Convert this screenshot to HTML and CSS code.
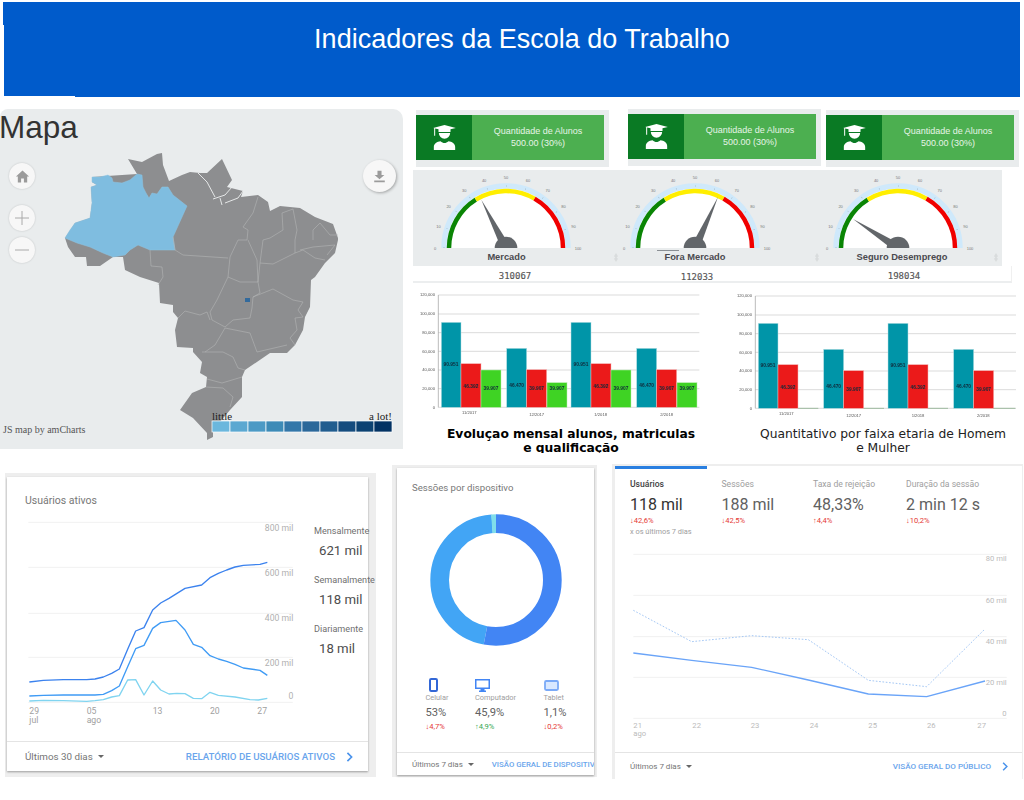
FILE: index.html
```html
<!DOCTYPE html>
<html lang="pt-BR">
<head>
<meta charset="utf-8">
<title>Indicadores da Escola do Trabalho</title>
<link rel="stylesheet" href="styles.css">
</head>
<body>
<header class="hero"><h1>Indicadores da Escola do Trabalho</h1></header>

<section class="top">
  <div class="map-panel">
    <h2 class="map-title">Mapa</h2>
    <svg class="map-canvas" viewBox="0 109 403 340" width="403" height="340">
      <path class="land" d="M128 159L142 162L157 154L162 153L163 165L169 181L182 175L190 172L200 173L207 173L222 159L232 180L227 187L243 191L241 197L258 195L268 202L270 211L280 206L300 208L315 217L333 224L338 238L338 240L335 253L325 263L315 277L311 280L310 307L305 317L303 330L295 345L287 353L270 353L245 370L242 377L242 397L230 410L213 430L213 437L207 440L207 433L193 418L180 410L192 393L206 387L207 377L200 373L202 362L193 352L193 348L177 347L175 330L178 318L173 312L173 305L160 303L159 283L140 277L125 270L123 257L113 257L100 266L87 266L86 257L75 257L68 247L65 238L75 223L90 218L92 203L91 187L97 185L92 182L92 177L137 174Z"/>
      <path class="amazonas" d="M92 177L100 177L108 175L112 178L113 182L122 183L130 180L137 174L142 175L143 187L146 193L149 198L152 193L157 194L162 187L168 187L173 195L187 206L173 237L175 250L150 250L138 245L130 250L125 255L113 257L103 253L90 247L77 243L65 238L70 230L75 223L90 218L92 203L91 187L97 185L92 182Z"/>
      <path class="border" d="M173 237L175 250L183 255L228 258M150 250L151 266L162 267L163 277L158 285M258 197L253 213L243 227L248 230L247 240L238 240L230 257L228 277L217 300L210 312L212 320L225 327L233 320L250 318L252 308L253 297L260 293L258 282L240 282L228 277M248 240L257 260L258 282L260 263L273 264L295 253L303 250L315 258L325 260M253 297L273 289L293 300L303 302L298 310L303 317L295 318L297 330L290 338L295 345M225 328L250 333L257 352L287 345M293 209L282 213L283 230L270 238L263 240L260 263M293 209L297 230L295 240L295 253M313 240L313 230L320 223L330 235L338 235M300 250L313 247L335 245L327 255M225 328L215 345L205 352M178 318L185 311L200 315L207 312L210 320M202 352L223 352L233 357L238 368L245 370M207 379L222 383L242 377M206 387L223 388L233 397L230 407"/>
      <path class="border-white" d="M198 173L207 182L215 197M213 199L225 195L232 187M225 203L238 198L243 191M220 198L222 205"/>
      <rect class="df" x="245" y="298" width="5" height="4"/>
      <text class="map-credit" x="3" y="433">JS map by amCharts</text>
      <text class="map-legend" x="212" y="420">little</text>
      <text class="map-legend map-legend-end" x="392" y="420">a lot!</text>
      <g class="legend-scale">
        <rect class="s0" x="212" y="421" width="18" height="11"/>
        <rect class="s1" x="230" y="421" width="18" height="11"/>
        <rect class="s2" x="248" y="421" width="18" height="11"/>
        <rect class="s3" x="266" y="421" width="18" height="11"/>
        <rect class="s4" x="284" y="421" width="18" height="11"/>
        <rect class="s5" x="302" y="421" width="18" height="11"/>
        <rect class="s6" x="320" y="421" width="18" height="11"/>
        <rect class="s7" x="338" y="421" width="18" height="11"/>
        <rect class="s8" x="356" y="421" width="18" height="11"/>
        <rect class="s9" x="374" y="421" width="18" height="11"/>
      </g>
    </svg>
    <div class="map-btn btn-home"><svg viewBox="0 0 16 16" width="15" height="15"><path class="btn-glyph" d="M8 1.5L15 8H13V14.5H9.5V10H6.5V14.5H3V8H1Z"/></svg></div>
    <div class="map-btn btn-plus"><svg viewBox="0 0 16 16" width="16" height="16"><path class="btn-line" d="M8 1V15M1 8H15"/></svg></div>
    <div class="map-btn btn-minus"><svg viewBox="0 0 16 16" width="16" height="16"><path class="btn-line" d="M1 8H15"/></svg></div>
    <div class="map-btn btn-save"><svg viewBox="0 0 16 16" width="13" height="15"><path class="btn-glyph" d="M5.5 1H10.5V6H14L8 11.5L2 6H5.5ZM1.5 13H14.5V15H1.5Z"/></svg></div>
  </div>

  <div class="dash">
    <div class="kpis">
      <div class="kpi kpi-a">
        <div class="kpi-inner">
          <div class="kpi-icon"><svg viewBox="0 0 68 75" width="23" height="25"><path class="grad" d="M0 9L34 0L68 9L52 13V21H16V13L6 10.5V32H3V10ZM17 24H51A17 17 0 0 1 17 24ZM2 75V66C2 56 12 50 22 49C30 56 38 56 46 49C56 50 66 56 66 66V75Z"/></svg></div>
          <p class="kpi-text">Quantidade de Alunos<br>500.00 (30%)</p>
        </div>
      </div>
      <div class="kpi kpi-b">
        <div class="kpi-inner">
          <div class="kpi-icon"><svg viewBox="0 0 68 75" width="23" height="25"><path class="grad" d="M0 9L34 0L68 9L52 13V21H16V13L6 10.5V32H3V10ZM17 24H51A17 17 0 0 1 17 24ZM2 75V66C2 56 12 50 22 49C30 56 38 56 46 49C56 50 66 56 66 66V75Z"/></svg></div>
          <p class="kpi-text">Quantidade de Alunos<br>500.00 (30%)</p>
        </div>
      </div>
      <div class="kpi kpi-c">
        <div class="kpi-inner">
          <div class="kpi-icon"><svg viewBox="0 0 68 75" width="23" height="25"><path class="grad" d="M0 9L34 0L68 9L52 13V21H16V13L6 10.5V32H3V10ZM17 24H51A17 17 0 0 1 17 24ZM2 75V66C2 56 12 50 22 49C30 56 38 56 46 49C56 50 66 56 66 66V75Z"/></svg></div>
          <p class="kpi-text">Quantidade de Alunos<br>500.00 (30%)</p>
        </div>
      </div>
    </div>

    <div class="gauges">
      <div class="gauge">
        <svg class="gauge-svg" viewBox="-80 -78 160 78" width="160" height="78">
          <defs>
            <g id="dial">
              <path class="dial-face" d="M-60 0A60 60 0 0 1 60 0Z"/>
              <path class="dial-band" d="M-62 0A62 62 0 0 1 62 0"/>
              <path class="dial-ticks" d="M-62 0A62 62 0 0 1 62 0"/>
              <path class="dial-green" d="M-57 0A57 57 0 0 1 -30.2 -48.3"/>
              <path class="dial-yellow" d="M-30.2 -48.3A57 57 0 0 1 28.5 -49.4"/>
              <path class="dial-red" d="M28.5 -49.4A57 57 0 0 1 57 0"/>
              <g class="dial-nums">
                <text x="-71" y="1.5">0</text>
                <text x="-67.5" y="-20.5">10</text>
                <text x="-57.4" y="-40">20</text>
                <text x="-41.7" y="-56">30</text>
                <text x="-21.9" y="-66">40</text>
                <text x="0" y="-69.5">50</text>
                <text x="21.9" y="-66">60</text>
                <text x="41.7" y="-56">70</text>
                <text x="57.4" y="-40">80</text>
                <text x="67.5" y="-20.5">90</text>
                <text x="72" y="1.5">100</text>
              </g>
            </g>
          </defs>
          <use href="#dial"/>
          <polygon class="needle" points="-24.7,-48.3 0.9,-7.1 -6.3,-3.5"/>
          <path class="hub" d="M-11.3 0A11.3 11.3 0 0 1 11.3 0Z"/>
        </svg>
        <div class="gauge-label gauge-label-nudge">Mercado</div>
      </div>
      <div class="gauge">
        <svg class="gauge-svg" viewBox="-80 -78 160 78" width="160" height="78">
          <use href="#dial"/>
          <polygon class="needle" points="23,-51 6.1,-3.9 -1.1,-7.1"/>
          <path class="hub" d="M-11.3 0A11.3 11.3 0 0 1 11.3 0Z"/>
        </svg>
        <div class="gauge-label gauge-label-rule">Fora Mercado</div>
      </div>
      <div class="gauge gauge-last">
        <svg class="gauge-svg" viewBox="-80 -78 160 78" width="160" height="78">
          <use href="#dial"/>
          <polygon class="needle" points="-45,-29 -2.8,-6.6 -7.2,-0.1"/>
          <path class="hub" d="M-11.3 0A11.3 11.3 0 0 1 11.3 0Z"/>
        </svg>
        <div class="gauge-label gauge-label-shift">Seguro Desemprego</div>
      </div>
      <i class="scroll-mark scroll-a"></i>
      <i class="scroll-mark scroll-b"></i>
      <i class="scroll-mark scroll-c"></i>
    </div>

    <div class="gauge-values">
      <span class="gv gv-a">310067</span>
      <span class="gv gv-b">112033</span>
      <span class="gv gv-c">198034</span>
    </div>

    <div class="bars">
      <figure class="bar-fig bar-fig-a">
        <svg class="bar-svg" viewBox="9 0 912 420" width="304" height="140">
          <g class="bar-grid">
            <path d="M85 30H868M85 87H868M85 143H868M85 199H868M85 255H868M85 311H868M85 367H868"/>
            <path class="bar-axis" d="M85 30V367"/>
          </g>
          <g class="y-nums">
            <text x="75" y="34">120,000</text><text x="75" y="91">100,000</text><text x="75" y="147">80,000</text><text x="75" y="203">60,000</text><text x="75" y="259">40,000</text><text x="75" y="315">20,000</text><text x="75" y="371">0</text>
          </g>
          <rect class="teal" x="94" y="112" width="59" height="255"/><rect class="red" x="153" y="236" width="60" height="131"/><rect class="green" x="213" y="255" width="60" height="112"/>
          <rect class="teal" x="290" y="190" width="60" height="177"/><rect class="red" x="350" y="254" width="60" height="113"/><rect class="green" x="411" y="293" width="60" height="74"/>
          <rect class="teal" x="483" y="112" width="60" height="255"/><rect class="red" x="543" y="236" width="60" height="131"/><rect class="green" x="603" y="255" width="60" height="112"/>
          <rect class="teal" x="680" y="190" width="60" height="177"/><rect class="red" x="740" y="254" width="60" height="113"/><rect class="green" x="801" y="293" width="60" height="74"/>
          <g class="bar-vals">
            <text x="123" y="244">90.951</text><text x="183" y="308">46.392</text><text x="243" y="315">39.907</text>
            <text x="320" y="306">46.470</text><text x="380" y="314">39.907</text><text x="441" y="315">39.907</text>
            <text x="513" y="244">90.951</text><text x="573" y="308">46.392</text><text x="633" y="315">39.907</text>
            <text x="710" y="306">46.470</text><text x="770" y="314">39.907</text><text x="831" y="315">39.907</text>
          </g>
          <g class="x-nums">
            <text x="178" y="387">11/2017</text><text x="380" y="392">12/2017</text><text x="572" y="392">1/2018</text><text x="770" y="392">2/2018</text>
          </g>
        </svg>
        <figcaption class="bar-cap bar-cap-bold">Evoluçao mensal alunos, matriculas<br>e qualificação</figcaption>
      </figure>
      <figure class="bar-fig bar-fig-b">
        <svg class="bar-svg" viewBox="-9 0 921 420" width="307" height="140">
          <g class="bar-grid">
            <path d="M106 33H888M106 90H888M106 146H888M106 202H888M106 258H888M106 314H888M106 370H888"/>
            <path class="bar-axis" d="M106 33V370"/>
          </g>
          <path class="bar-ground" d="M234 370H295M431 370H492M623 370H684M820 370H886"/>
          <g class="y-nums">
            <text x="96" y="37">120,000</text><text x="96" y="94">100,000</text><text x="96" y="150">80,000</text><text x="96" y="206">60,000</text><text x="96" y="262">40,000</text><text x="96" y="318">20,000</text><text x="96" y="374">0</text>
          </g>
          <rect class="teal" x="115" y="115" width="59" height="255"/><rect class="red" x="174" y="239" width="60" height="131"/>
          <rect class="teal" x="311" y="193" width="60" height="177"/><rect class="red" x="371" y="257" width="60" height="113"/>
          <rect class="teal" x="504" y="115" width="60" height="255"/><rect class="red" x="564" y="239" width="60" height="131"/>
          <rect class="teal" x="701" y="193" width="60" height="177"/><rect class="red" x="761" y="257" width="60" height="113"/>
          <g class="bar-vals">
            <text x="144" y="247">90.951</text><text x="204" y="311">46.392</text>
            <text x="341" y="309">46.470</text><text x="401" y="317">39.907</text>
            <text x="534" y="247">90.951</text><text x="594" y="311">46.392</text>
            <text x="731" y="309">46.470</text><text x="791" y="317">39.907</text>
          </g>
          <g class="x-nums">
            <text x="199" y="390">11/2017</text><text x="401" y="395">12/2017</text><text x="594" y="395">1/2018</text><text x="790" y="395">2/2018</text>
          </g>
        </svg>
        <figcaption class="bar-cap">Quantitativo por faixa etaria de Homem<br>e Mulher</figcaption>
      </figure>
    </div>
  </div>
</section>

<section class="analytics">
  <div class="shell shell-a">
    <article class="card">
      <h3 class="card-title card-title-a">Usuários ativos</h3>
      <div class="active-body">
        <svg class="active-chart" viewBox="21 135 909 675" width="303" height="225">
          <path class="ga-grid" d="M85 172H878M85 307H878M85 445H878M85 577H878M85 712H878"/>
          <polyline class="ga-l3" points="88,708 130,706 190,707 260,709 285,707 310,704 335,696 358,692 383,645 407,644 432,690 458,648 482,675 507,687 530,685 555,686 580,700 605,701 630,682 655,691 705,696 750,704 775,705 802,700"/>
          <polyline class="ga-l2" points="88,693 130,691 190,690 260,690 285,690 310,688 335,677 358,663 383,605 407,551 432,541 458,490 482,473 528,466 555,495 580,538 605,547 630,572 655,582 680,589 705,598 730,609 780,616 802,631"/>
          <polyline class="ga-l1" points="88,651 130,646 190,644 260,644 285,642 310,636 335,625 358,612 383,553 407,498 432,488 458,435 482,414 507,400 555,370 605,360 630,338 655,325 680,315 705,306 730,301 780,298 802,292"/>
          <g class="ga-axis ga-axis-end">
            <text x="880" y="198">800 mil</text><text x="880" y="334">600 mil</text><text x="880" y="469">400 mil</text><text x="880" y="604">200 mil</text><text x="880" y="702">0</text>
          </g>
          <g class="ga-axis">
            <text x="88" y="746">29</text><text x="88" y="774">jul</text>
            <text x="260" y="746">05</text><text x="260" y="774">ago</text>
            <text x="458" y="746">13</text><text x="630" y="746">20</text><text x="772" y="746">27</text>
          </g>
        </svg>
        <div class="active-stats">
          <div class="stat"><div class="stat-label">Mensalmente</div><div class="stat-value">621 mil</div></div>
          <div class="stat"><div class="stat-label">Semanalmente</div><div class="stat-value">118 mil</div></div>
          <div class="stat"><div class="stat-label">Diariamente</div><div class="stat-value">18 mil</div></div>
        </div>
      </div>
      <footer class="card-foot card-foot-a">
        <span class="range">Últimos 30 dias<i class="caret"></i></span>
        <span class="foot-link">RELATÓRIO DE USUÁRIOS ATIVOS<svg class="chev" viewBox="0 0 8 12" width="7" height="10"><path d="M1.5 1L6.5 6L1.5 11"/></svg></span>
      </footer>
    </article>
  </div>

  <div class="shell shell-b">
    <article class="card">
      <h3 class="card-title card-title-b">Sessões por dispositivo</h3>
      <svg class="donut" viewBox="0 0 140 140" width="140" height="140">
        <g class="donut-ring">
          <circle class="seg-desktop" cx="70" cy="70" r="56.35" pathLength="100" stroke-dasharray="45.9 100" stroke-dashoffset="-53"/>
          <circle class="seg-mobile" cx="70" cy="70" r="56.35" pathLength="100" stroke-dasharray="53 100"/>
          <circle class="seg-tablet" cx="70" cy="70" r="56.35" pathLength="100" stroke-dasharray="1.2 100" stroke-dashoffset="-98.8"/>
        </g>
      </svg>
      <div class="devices">
        <div class="device">
          <div class="device-icon"><svg class="icon-phone" viewBox="0 0 9 14" width="9" height="14"><rect x="1" y="1" width="7" height="12" rx="1.2"/></svg></div>
          <div class="device-name">Celular</div>
          <div class="device-value">53%</div>
          <div class="delta delta-down">↓4,7%</div>
        </div>
        <div class="device">
          <div class="device-icon"><svg viewBox="0 0 15 13" width="15" height="13"><path class="icon-monitor" d="M0 0H15V10H9.5V11.5H11V13H4V11.5H5.5V10H0ZM1.5 1.5V8.5H13.5V1.5Z"/></svg></div>
          <div class="device-name">Computador</div>
          <div class="device-value">45,9%</div>
          <div class="delta delta-up">↑4,9%</div>
        </div>
        <div class="device">
          <div class="device-icon"><svg class="icon-tablet" viewBox="0 0 15 11" width="15" height="11"><rect x="1" y="1" width="13" height="9" rx="1.2"/></svg></div>
          <div class="device-name">Tablet</div>
          <div class="device-value">1,1%</div>
          <div class="delta delta-down">↓0,2%</div>
        </div>
      </div>
      <footer class="card-foot card-foot-b">
        <span class="range">Últimos 7 dias<i class="caret"></i></span>
        <span class="foot-link foot-link-clip">VISÃO GERAL DE DISPOSITIVOS</span>
      </footer>
    </article>
  </div>

  <div class="shell shell-c">
    <article class="card">
      <div class="tab-marker"></div>
      <div class="tabs">
        <div class="tab tab-on">
          <div class="tab-label">Usuários</div>
          <div class="tab-value">118 mil</div>
          <div class="delta delta-down">↓42,6%</div>
          <div class="tab-note">x os últimos 7 dias</div>
        </div>
        <div class="tab">
          <div class="tab-label">Sessões</div>
          <div class="tab-value">188 mil</div>
          <div class="delta delta-down">↓42,5%</div>
        </div>
        <div class="tab">
          <div class="tab-label">Taxa de rejeição</div>
          <div class="tab-value">48,33%</div>
          <div class="delta delta-down">↑4,4%</div>
        </div>
        <div class="tab">
          <div class="tab-label">Duração da sessão</div>
          <div class="tab-value">2 min 12 s</div>
          <div class="delta delta-down">↓10,2%</div>
        </div>
      </div>
      <svg class="audience-chart" viewBox="30 240 1218 615" width="406" height="205">
        <path class="ga-grid" d="M85 283H1205M85 406H1205M85 530H1205M85 652H1205M85 775H1205"/>
        <polyline class="aud-prev" points="85,451 260,545 440,527 610,539 790,661 965,680 1140,507"/>
        <polyline class="aud-now" points="85,579 260,601 440,622 610,660 790,702 965,710 1140,663"/>
        <g class="ga-axis ga-axis-end aud-axis">
          <text x="1205" y="304">80 mil</text><text x="1205" y="429">60 mil</text><text x="1205" y="552">40 mil</text><text x="1205" y="675">20 mil</text><text x="1205" y="768">0</text>
        </g>
        <g class="ga-axis aud-axis">
          <text x="85" y="804">21</text><text x="85" y="828">ago</text>
          <text x="262" y="804">22</text><text x="437" y="804">23</text><text x="614" y="804">24</text><text x="790" y="804">25</text><text x="966" y="804">26</text><text x="1117" y="804">27</text>
        </g>
      </svg>
      <footer class="card-foot card-foot-c">
        <span class="range">Últimos 7 dias<i class="caret"></i></span>
        <span class="foot-link foot-link-small">VISÃO GERAL DO PÚBLICO<svg class="chev" viewBox="0 0 8 12" width="6" height="9"><path d="M1.5 1L6.5 6L1.5 11"/></svg></span>
      </footer>
    </article>
  </div>
</section>
</body>
</html>
```
FILE: styles.css
```css
* { box-sizing: border-box; }
html, body { margin: 0; padding: 0; }
body {
  width: 1024px;
  height: 800px;
  overflow: hidden;
  background: #fff;
  font-family: Roboto, "Liberation Sans", sans-serif;
}
svg { display: block; }
h1, h2, h3, p, figure { margin: 0; font-weight: 400; }

/* header */
.hero {
  position: relative;
  margin: 2px 4px 0 4px;
  height: 95px;
  background: #005bcb;
  text-align: center;
  color: #fff;
}
.hero::before {
  content: "";
  position: absolute;
  left: -1px; top: 0;
  width: 1px; height: 23px;
  background: #005bcb;
}
.hero::after {
  content: "";
  position: absolute;
  left: 0; bottom: 0;
  width: 71px; height: 1px;
  background: #fff;
}
.hero h1 {
  font-family: "Liberation Sans", Arial, sans-serif;
  font-size: 27px;
  line-height: 30px;
  padding: 22px 0 0 20px;
}

/* top area */
.top { display: flex; margin-top: 12px; height: 355px; }

.map-panel {
  position: relative;
  flex: none;
  width: 403px;
  height: 340px;
  background: #e9eced;
  border-radius: 8px 10px 0 0;
  overflow: hidden;
}
.map-title {
  position: absolute;
  left: -1px; top: 0;
  font-family: "Liberation Sans", Arial, sans-serif;
  font-size: 31.5px;
  line-height: 36px;
  color: #333;
}
.map-canvas { position: absolute; left: 0; top: 0; }
.land { fill: #8d8e90; }
.amazonas { fill: #7fbde0; stroke: #8ec5e3; stroke-width: .5; }
.border { fill: none; stroke: #b4b5b6; stroke-width: .6; }
.border-white { fill: none; stroke: #eef0f1; stroke-width: .9; }
.df { fill: #336a9c; }
.map-credit { font: 10px "Liberation Serif", serif; fill: #555; }
.map-legend { font: 11px "Liberation Serif", serif; fill: #222; }
.map-legend-end { text-anchor: end; }
.legend-scale rect { stroke: #fff; stroke-width: .7; }
.s0 { fill: #6bb7dd; } .s1 { fill: #5ba8d1; } .s2 { fill: #4c9ac5; } .s3 { fill: #3d8bb7; }
.s4 { fill: #3377a9; } .s5 { fill: #2b689a; } .s6 { fill: #215d8f; } .s7 { fill: #154c7e; }
.s8 { fill: #0c4272; } .s9 { fill: #023263; }

.map-btn {
  position: absolute;
  display: flex;
  align-items: center;
  justify-content: center;
  width: 26px; height: 26px;
  left: 9px;
  border-radius: 50%;
  background: #f7f7f7;
  box-shadow: 0 0 2px rgba(0,0,0,.18);
}
.btn-home { top: 54px; }
.btn-plus { top: 96px; }
.btn-minus { top: 128px; }
.btn-save {
  left: 363px; top: 51px;
  width: 33px; height: 32px;
  box-shadow: 1px 1px 3px rgba(0,0,0,.3);
}
.btn-glyph { fill: #9b9b9b; }
.btn-line { fill: none; stroke: #aaa; stroke-width: 1; }

/* right column */
.dash { flex: none; width: 611px; margin-left: 10px; }

.kpis { display: flex; height: 58px; margin-bottom: 3px; }
.kpi {
  flex: none;
  width: 193px;
  height: 57px;
  padding: 5px 5px 7px 0;
  background: #e9eced;
}
.kpi-a { margin: 1px 0 0 3px; }
.kpi-b { margin: 0 0 0 19px; }
.kpi-c { margin: 1px 0 0 5px; }
.kpi-inner { display: flex; height: 45px; background: #4caf50; }
.kpi-icon {
  flex: none;
  width: 56px;
  background: #0a7a24;
  display: flex;
  align-items: center;
  justify-content: center;
}
.grad { fill: #fff; }
.kpi-text {
  flex: 1;
  align-self: center;
  text-align: center;
  font: 9px/12px "Liberation Sans", Arial, sans-serif;
  color: #e6f4e7;
  padding-bottom: 1px;
}

.gauges {
  position: relative;
  display: grid;
  grid-template-columns: 185px 194px 210px;
  width: 589px;
  height: 96px;
  background: #e9eced;
}
.gauge { display: flex; flex-direction: column; align-items: center; }
.gauge-last { padding-left: 2px; }
.gauge-svg { overflow: visible; }
.gauge-label {
  position: relative;
  font: bold 9.3px/18px "Liberation Sans", Arial, sans-serif;
  color: #4a4a4f;
}
.gauge-label-nudge { left: 1px; }
.gauge-label-shift { left: 4px; }
.gauge-label-rule::before {
  content: "";
  position: absolute;
  left: -8px; top: 2px;
  width: 22px; height: 1px;
  background: #8a8f94;
}
.scroll-mark {
  position: absolute;
  top: 83px;
  width: 4px; height: 9px;
  background: #d9dcdd;
  clip-path: polygon(50% 0, 100% 35%, 65% 50%, 100% 65%, 50% 100%, 0 65%, 35% 50%, 0 35%);
}
.scroll-a { left: 201px; }
.scroll-b { left: 402px; }
.scroll-c { left: 581px; }
.dial-face { fill: #fff; }
.dial-band { fill: none; stroke: #cfe9fb; stroke-width: 5.5; }
.dial-ticks { fill: none; stroke: #9fb4c4; stroke-width: 1.5; stroke-dasharray: .5 18.98; }
.dial-green, .dial-yellow, .dial-red { fill: none; stroke-width: 4.5; }
.dial-green { stroke: #0a8505; }
.dial-yellow { stroke: #ffee00; }
.dial-red { stroke: #f00000; }
.dial-nums text { font: 4px "Liberation Sans", Arial, sans-serif; fill: #777; text-anchor: middle; }
.needle, .hub { fill: #62666a; }

.gauge-values {
  display: grid;
  grid-template-columns: 204px 160px 235px;
  width: 599px;
  height: 17px;
  border-bottom: 2px solid #eceeef;
  border-right: 1px solid #f0f0f0;
}
.gv {
  font: 9px/21px "DejaVu Sans Mono", monospace;
  color: #555;
  text-align: center;
  -webkit-text-stroke: .15px #555;
}
.gv-b { padding-top: 1px; }
.gv-c { padding-left: 19px; }

.bars { display: flex; margin-top: 2px; }
.bar-fig-a { width: 304px; }
.bar-fig-b { width: 307px; }
.bar-svg { filter: blur(.45px); }
.bar-grid path { fill: none; stroke: #c9c9c9; stroke-width: 2; }
.bar-grid .bar-axis { stroke: #999; }
.bar-ground { fill: none; stroke: #7fa880; stroke-width: 2; }
.y-nums text { font: 12.5px "Liberation Sans", Arial, sans-serif; fill: #555; text-anchor: end; }
.x-nums text { font: 12.5px "Liberation Sans", Arial, sans-serif; fill: #555; text-anchor: middle; }
.bar-vals text { font: bold 14.5px "Liberation Sans", Arial, sans-serif; fill: #102a3a; text-anchor: middle; }
.teal { fill: #0095a8; stroke: #b7dfe4; stroke-width: 1.5; }
.red { fill: #eb1a1a; stroke: #f5b5b5; stroke-width: 1.5; }
.green { fill: #3fd324; stroke: #bdeeb2; stroke-width: 1.5; }
.bar-cap {
  height: 28px;
  overflow: hidden;
  text-align: center;
  font: 12.3px/14px "DejaVu Sans", Verdana, sans-serif;
  color: #222;
  margin-top: 2px;
}
.bar-fig-a .bar-cap { padding-left: 12px; }
.bar-fig-b .bar-cap { padding-left: 25px; }
.bar-cap-bold { height: 26px; color: #000; font-weight: bold; }

/* analytics row */
.analytics {
  display: grid;
  grid-template-columns: 371px 205px 410px;
  column-gap: 16px;
  padding-left: 5px;
  margin-top: 0;
  align-items: start;
}
.shell { background: #eeeeee; display: flex; }
.shell-a { height: 304px; margin-top: 9px; padding: 4px 8px 6px 2px; }
.shell-b { height: 312px; margin-top: 1px; padding: 3px 3px 2px 5px; }
.shell-c { height: 315px; margin-left: -1px; padding: 2px 1px 0 3px; }
.card {
  flex: 1;
  min-width: 0;
  display: flex;
  flex-direction: column;
  background: #fff;
  box-shadow: 0 1px 2px rgba(0,0,0,.35);
}
.shell-c .card { box-shadow: none; }

.card-title { font-size: 10.5px; line-height: 20px; color: #777; }
.card-title-a { height: 33px; padding: 14px 0 0 18px; flex: none; }
.card-title-b { font-size: 9.6px; padding: 10px 0 0 15px; }

.active-body { display: flex; flex: none; height: 225px; }
.active-chart { flex: none; }
.active-stats { padding: 11px 0 0 4px; }
.stat { height: 49px; white-space: nowrap; }
.stat-label { font-size: 9.1px; line-height: 20px; color: #6f6f6f; }
.stat-value { font-size: 13.2px; line-height: 20px; color: #4d4d4d; padding-left: 5px; }

.ga-grid { fill: none; stroke: #ececec; stroke-width: 2.4; }
.ga-l1, .ga-l2, .ga-l3, .aud-now, .aud-prev { fill: none; stroke-linejoin: round; }
.ga-l1 { stroke: #3b82ee; stroke-width: 4; }
.ga-l2 { stroke: #3f9bf5; stroke-width: 4; }
.ga-l3 { stroke: #80d4f0; stroke-width: 4; }
.ga-axis text { font: 26px Roboto, sans-serif; fill: #a0a0a0; }
.ga-axis-end text { text-anchor: end; fill: #b0b0b0; }
.aud-axis text { font-size: 23px; fill: #bbb; }
.aud-now { stroke: #6aa4f8; stroke-width: 4; }
.aud-prev { stroke: #a5c8f5; stroke-width: 3; stroke-dasharray: 5 5; }

.card-foot {
  margin-top: auto;
  flex: none;
  display: flex;
  align-items: center;
  justify-content: space-between;
  border-top: 1px solid #e4e4e4;
  white-space: nowrap;
  overflow: hidden;
}
.card-foot-a { height: 30px; padding: 0 15px 0 18px; }
.card-foot-b { height: 23px; padding: 0 0 0 15px; justify-content: flex-start; }
.card-foot-c { height: 27px; padding: 0 14px 0 15px; }
.range { font-size: 9.8px; color: #757575; display: inline-flex; align-items: center; }
.card-foot-b .range, .card-foot-c .range { font-size: 8px; }
.caret {
  display: inline-block;
  margin-left: 5px;
  border-left: 3px solid transparent;
  border-right: 3px solid transparent;
  border-top: 3px solid #666;
}
.foot-link {
  display: inline-flex;
  align-items: center;
  font-size: 9.7px;
  font-weight: 500;
  color: #6aa5ec;
}
.foot-link-clip { margin-left: 18px; font-size: 7.8px; }
.foot-link-small { font-size: 8.1px; }
.chev { margin-left: 11px; }
.chev path { fill: none; stroke: #4a93ec; stroke-width: 2; }

.donut { flex: none; margin: 12px 0 0 29px; }
.donut-ring circle { fill: none; stroke-width: 18.7; transform: rotate(-90deg); transform-origin: 70px 70px; }
.seg-mobile { stroke: #4285f4; }
.seg-desktop { stroke: #42a5f5; }
.seg-tablet { stroke: #80deea; }

.devices {
  display: grid;
  grid-template-columns: 49.5px 68.5px 1fr;
  margin: 28px 0 0 28.5px;
}
.device-icon { height: 14px; display: flex; align-items: center; }
.icon-phone { margin-left: 3px; fill: #fff; stroke: #3367d6; stroke-width: 2; }
.icon-monitor { fill: #4285f4; }
.icon-tablet { fill: #d9e8ff; stroke: #7baaf7; stroke-width: 1.8; }
.device-name { font-size: 7.4px; line-height: 12px; color: #9e9e9e; }
.device-value { font-size: 11.2px; line-height: 18px; color: #616161; }
.delta { font-size: 7.6px; line-height: 10px; }
.delta-down { color: #e53935; }
.delta-up { color: #34a853; }

.tab-marker { flex: none; width: 92px; height: 3px; background: #2a7fe0; }
.tabs {
  flex: none;
  display: grid;
  grid-template-columns: 91.5px 91.5px 93px 1fr;
  height: 71px;
  padding: 5px 0 0 15px;
}
.tab-label { font-size: 8.6px; line-height: 20px; color: #9e9e9e; white-space: nowrap; }
.tab-on .tab-label { font-weight: 500; color: #424242; }
.tab-value { font-size: 16px; line-height: 22px; color: #616161; white-space: nowrap; }
.tab-on .tab-value { color: #333; }
.tab-note { font-size: 7.4px; line-height: 12px; color: #9e9e9e; white-space: nowrap; }
.audience-chart { flex: none; }
```
